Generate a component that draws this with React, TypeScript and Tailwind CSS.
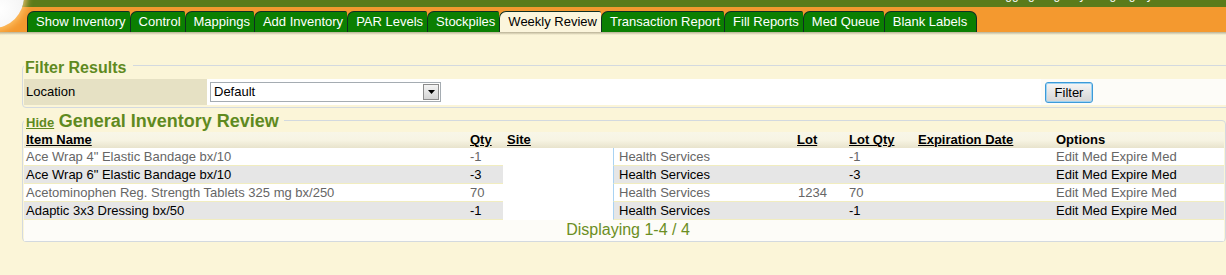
import React from "react";

const tabs = [
  "Show Inventory",
  "Control",
  "Mappings",
  "Add Inventory",
  "PAR Levels",
  "Stockpiles",
  "Weekly Review",
  "Transaction Report",
  "Fill Reports",
  "Med Queue",
  "Blank Labels",
];

const rows = [
  { name: 'Ace Wrap 4" Elastic Bandage bx/10', qty: "-1", site: "Health Services", lot: "", lotQty: "-1" },
  { name: 'Ace Wrap 6" Elastic Bandage bx/10', qty: "-3", site: "Health Services", lot: "", lotQty: "-3" },
  { name: "Acetominophen Reg. Strength Tablets 325 mg bx/250", qty: "70", site: "Health Services", lot: "1234", lotQty: "70" },
  { name: "Adaptic 3x3 Dressing bx/50", qty: "-1", site: "Health Services", lot: "", lotQty: "-1" },
];

function Header() {
  return (
    <div className="relative">
      {/* top green strip, user line mostly scrolled off the top */}
      <div className="relative h-[7px] overflow-hidden bg-[#5b7b1a]">
        <span className="absolute left-[992px] top-[-12px] text-[12px] leading-[14px] text-white">
          Logging Regency Wing Ogilvy
        </span>
      </div>
      {/* orange band with tabs */}
      <div className="flex h-[25px] items-end bg-[#f4992f] pl-[27px]">
        {tabs.map((t, i) => {
          const active = t === "Weekly Review";
          const last = i === tabs.length - 1;
          return (
            <div
              key={t}
              className={
                "h-[21px] whitespace-nowrap rounded-tl-[7px] border-l border-t border-[#0f2f22] pl-[8px] pr-[4px] text-[13px] leading-[20px] " +
                (active ? "bg-[#fbf5dc] text-black " : "bg-[#0b7f02] text-white ") +
                (last ? "rounded-tr-[7px] border-r pr-[9px]" : "rounded-tr-[2px]")
              }
            >
              {t}
            </div>
          );
        })}
      </div>
      <div className="h-[3px] bg-gradient-to-b from-[#b9b196] to-[#fbf5d8]" />
      {/* logo edge */}
      <div className="absolute left-[-38px] top-[-34px] h-[62px] w-[62px] rounded-full bg-[radial-gradient(circle_at_60%_70%,#ffffff_0%,#f2f2f2_55%,#d9d9d9_100%)] shadow-[0_0_6px_3px_rgba(255,200,110,0.8)]" />
    </div>
  );
}

function FilterResults() {
  return (
    <fieldset className="w-[1230px] rounded-[4px] border border-[#d3d9df] px-[1px] pb-[2px] pt-[5px]">
      <legend className="pl-[1px] pr-[7px] text-[16px] font-bold leading-[18px] text-[#5f8a1f]">
        <span className="relative top-[3px]">Filter Results</span>
      </legend>
      <div className="flex h-[26px] text-[13px]">
        <div className="flex w-[183px] items-center bg-[#e6e1c4] pl-[2px] text-black">Location</div>
        <div className="flex w-[834px] items-center bg-white pl-[3px]">
          <div className="flex h-[20px] w-[231px] items-center justify-between border border-[#a5acb2] bg-white pl-[3px] pr-[1px]">
            <span className="text-black">Default</span>
            <div className="flex h-[16px] w-[16px] items-center justify-center border border-[#8c8c8c] bg-gradient-to-b from-[#f4f4f4] to-[#d4d4d4]">
              <svg width="7" height="4" viewBox="0 0 7 4">
                <path d="M0 0h7L3.5 4z" fill="#000" />
              </svg>
            </div>
          </div>
        </div>
        <div className="flex flex-1 items-center bg-[#fdfcf8] pl-[4px]">
          <button className="h-[21px] w-[48px] rounded-[3px] border border-[#3c9ad8] bg-gradient-to-b from-[#f6f6f6] to-[#d4d4d4] text-[13px] leading-[19px] text-black shadow-[inset_0_0_0_1px_#9fd3f2]">
            Filter
          </button>
        </div>
      </div>
    </fieldset>
  );
}

const cols = "grid grid-cols-[444px_35px_110px_182px_52px_69px_138px_1fr]";

function InventoryReview() {
  return (
    <fieldset className="mt-[1px] w-[1204px] rounded-[4px] border border-[#d3d9df] px-[1px] pt-[1px]">
      <legend className="pl-[2px] pr-[5px] leading-[20px]">
        <span className="relative top-[2px]">
          <span className="text-[13px] font-bold text-[#5f8a1f] underline">Hide</span>{" "}
          <span className="text-[18px] font-bold text-[#5f8a1f]">General Inventory Review</span>
        </span>
      </legend>
      <div className={cols + " h-[16px] bg-gradient-to-b from-[#f8f6e8] via-[#f7f4e3] to-[#e8e3cc] text-[13px] font-bold leading-[16px] text-black"}>
        <div className="pl-[2px]"><span className="underline">Item Name</span></div>
        <div className="pl-[2px]"><span className="underline">Qty</span></div>
        <div className="col-span-2 pl-[4px]"><span className="underline">Site</span></div>
        <div className="pl-[2px]"><span className="underline">Lot</span></div>
        <div className="pl-[2px]"><span className="underline">Lot Qty</span></div>
        <div className="pl-[2px]"><span className="underline">Expiration Date</span></div>
        <div className="pl-[2px]">Options</div>
      </div>
      <div className={cols + " text-[13px] leading-[17px]"}>
        <div className="col-start-3 row-span-4 row-start-1 bg-white" />
        {rows.map((r, i) => {
          const odd = i % 2 === 1;
          const cell =
            "h-[18px] border-b border-[#f1edc0] pl-[2px] " +
            (odd ? "bg-[#e6e6e6] text-black" : "bg-white text-[#666666]");
          return (
            <React.Fragment key={r.name}>
              <div className={cell}>{r.name}</div>
              <div className={cell}>{r.qty}</div>
              <div className={cell + " border-l border-l-[#a9d3f3] pl-[5px]"}>{r.site}</div>
              <div className={cell + " pl-[3px]"}>{r.lot}</div>
              <div className={cell}>{r.lotQty}</div>
              <div className={cell} />
              <div className={cell}>Edit Med Expire Med</div>
            </React.Fragment>
          );
        })}
      </div>
      <div className="h-[21px] bg-[#fdfcf8] pl-[8px] text-center text-[16px] leading-[20px] text-[#6b8e23]">
        Displaying 1-4 / 4
      </div>
    </fieldset>
  );
}

export default function App() {
  return (
    <div className="h-[275px] w-full overflow-hidden bg-[#fbf5d8] font-['Liberation_Sans',Arial,sans-serif]">
      <Header />
      <div className="w-[1260px] pl-[22px] pt-[21px]">
        <FilterResults />
        <InventoryReview />
      </div>
    </div>
  );
}
